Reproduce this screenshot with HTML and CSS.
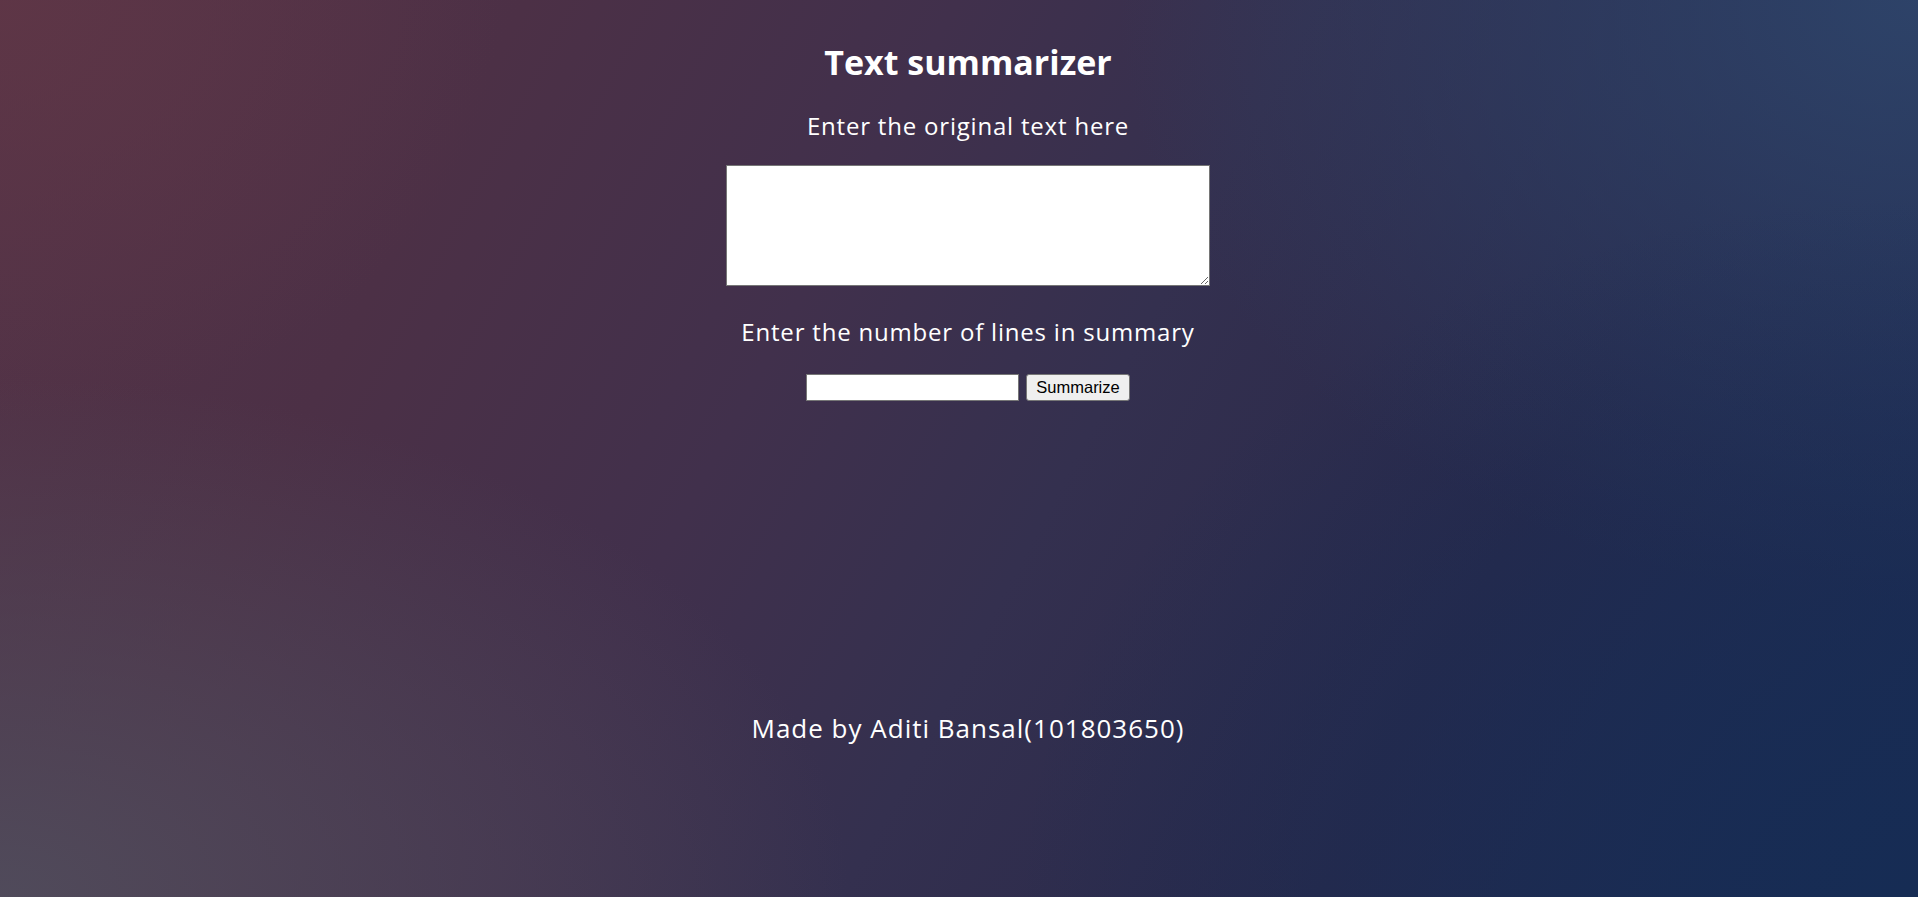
FILE: index.html
```html
<!DOCTYPE html>
<html lang="en">
<head>
<meta charset="utf-8">
<title>Text summarizer</title>
<link rel="stylesheet" href="styles.css">
</head>
<body>
<main class="page">
  <h1 class="title">Text summarizer</h1>
  <form class="form">
    <label class="label label-first" for="text">Enter the original text here</label>
    <textarea id="text" class="textarea"></textarea>
    <label class="label label-second" for="lines">Enter the number of lines in summary</label>
    <div class="row">
      <input id="lines" class="num-input" type="text">
      <button type="button" class="btn">Summarize</button>
    </div>
  </form>
  <p class="footer">Made by Aditi Bansal(101803650)</p>
</main>
</body>
</html>
```

FILE: styles.css
```css
html, body {
  margin: 0;
  padding: 0;
  height: 100%;
}

body {
  font-family: "Open Sans", "Liberation Sans", sans-serif;
  color: #ffffff;
  background-color: #302d4d;
  background-image:
    radial-gradient(ellipse 850px 520px at 0% 100%, rgba(80, 76, 92, 0.95), rgba(80, 76, 92, 0) 100%),
    radial-gradient(ellipse 500px 420px at 0% 0%, rgba(96, 54, 70, 0.8), rgba(96, 54, 70, 0) 100%),
    radial-gradient(ellipse 900px 700px at 100% 100%, rgba(22, 44, 84, 1), rgba(22, 44, 84, 0) 100%),
    radial-gradient(ellipse 800px 600px at 100% 0%, rgba(46, 68, 106, 0.95), rgba(46, 68, 106, 0) 100%),
    linear-gradient(118deg, #553447 0%, #4c3046 22%, #41304c 40%, #34304f 55%, #28294b 75%, #1c2c55 100%);
  overflow: hidden;
}

.page {
  min-height: 100vh;
  box-sizing: border-box;
  padding: 40px 0 0 18px;
  display: flex;
  flex-direction: column;
  align-items: center;
  text-align: center;
}

.title {
  margin: 0;
  font-size: 34px;
  line-height: 44px;
  font-weight: 700;
}

.form {
  display: flex;
  flex-direction: column;
  align-items: center;
}

.label {
  display: block;
  font-size: 24px;
  line-height: 30px;
  letter-spacing: 0.8px;
}

.label-first {
  margin-top: 27px;
}

.label-second {
  margin-top: 31px;
}

.textarea {
  display: block;
  margin-top: 24px;
  width: 484px;
  height: 121px;
  box-sizing: border-box;
  border: 1px solid #767676;
  background: #ffffff;
  padding: 2px;
  font-family: "Liberation Mono", monospace;
  font-size: 16px;
}

.row {
  margin-top: 27px;
  display: flex;
  align-items: center;
  gap: 7px;
}

.num-input {
  width: 213px;
  height: 27px;
  box-sizing: border-box;
  border: 1px solid #767676;
  background: #ffffff;
  padding: 1px 2px;
  font-family: "Liberation Sans", Arial, sans-serif;
  font-size: 16px;
}

.btn {
  width: 104px;
  height: 27px;
  box-sizing: border-box;
  border: 1px solid #767676;
  border-radius: 3px;
  background: #efefef;
  color: #000000;
  padding: 0;
  font-family: "Liberation Sans", Arial, sans-serif;
  font-size: 16.5px;
}

.footer {
  margin: 311px 0 0;
  font-size: 26px;
  line-height: 32px;
  letter-spacing: 1px;
}
```
